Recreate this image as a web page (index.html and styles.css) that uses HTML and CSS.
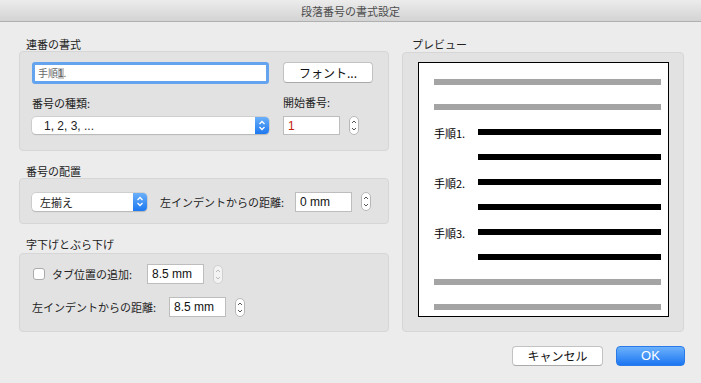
FILE: index.html
```html
<!DOCTYPE html>
<html lang="ja">
<head>
    <meta charset="UTF-8">
    <title>段落番号の書式設定</title>
    <link rel="stylesheet" href="styles.css">
</head>
<body>
    <div class="titlebar">段落番号の書式設定</div>

    <div class="main">
        <div class="left">
            <div class="group-title">連番の書式</div>
            <div class="box box-format">
                <div class="col col-wide">
                    <div class="field focus"><span class="field-text">手順<span class="sel">1</span>.</span></div>
                    <div class="label">番号の種類:</div>
                    <div class="popup popup-wide"><span class="popup-text">1, 2, 3, ...</span><span class="cap"><svg width="8" height="11" viewBox="0 0 8 11"><path d="M1.5 4 L4 1.5 L6.5 4 M1.5 7 L4 9.5 L6.5 7" fill="none" stroke="#fff" stroke-width="1.3"/></svg></span></div>
                </div>
                <div class="col">
                    <div class="button font-btn">フォント...</div>
                    <div class="label">開始番号:</div>
                    <div class="row">
                        <div class="input input-start"><span class="red">1</span></div>
                        <div class="stepper"><svg width="8" height="15" viewBox="0 0 8 15"><path d="M2 5 L4 3 L6 5 M2 10 L4 12 L6 10" fill="none" stroke="#555" stroke-width="1"/></svg></div>
                    </div>
                </div>
            </div>

            <div class="group-title gap">番号の配置</div>
            <div class="box box-align">
                <div class="popup popup-small"><span class="popup-text">左揃え</span><span class="cap"><svg width="8" height="11" viewBox="0 0 8 11"><path d="M1.5 4 L4 1.5 L6.5 4 M1.5 7 L4 9.5 L6.5 7" fill="none" stroke="#fff" stroke-width="1.3"/></svg></span></div>
                <div class="label inline dist">左インデントからの距離:</div>
                <div class="input input-mm">0 mm</div>
                <div class="stepper"><svg width="8" height="15" viewBox="0 0 8 15"><path d="M2 5 L4 3 L6 5 M2 10 L4 12 L6 10" fill="none" stroke="#555" stroke-width="1"/></svg></div>
            </div>

            <div class="group-title gap gap-last">字下げとぶら下げ</div>
            <div class="box box-indent">
                <div class="row">
                    <div class="checkbox"></div>
                    <div class="label inline tab">タブ位置の追加:</div>
                    <div class="input input-mm">8.5 mm</div>
                    <div class="stepper off"><svg width="8" height="15" viewBox="0 0 8 15"><path d="M2 5 L4 3 L6 5 M2 10 L4 12 L6 10" fill="none" stroke="#bbb" stroke-width="1"/></svg></div>
                </div>
                <div class="row row-second">
                    <div class="label inline">左インデントからの距離:</div>
                    <div class="input input-mm">8.5 mm</div>
                    <div class="stepper"><svg width="8" height="15" viewBox="0 0 8 15"><path d="M2 5 L4 3 L6 5 M2 10 L4 12 L6 10" fill="none" stroke="#555" stroke-width="1"/></svg></div>
                </div>
            </div>
        </div>

        <div class="right">
            <div class="group-title preview-title">プレビュー</div>
            <div class="box box-preview">
                <div class="page">
                    <div class="pline"><span class="bar gray"></span></div>
                    <div class="pline"><span class="bar gray"></span></div>
                    <div class="pline"><span class="step">手順1.</span><span class="bar"></span></div>
                    <div class="pline"><span class="step"></span><span class="bar"></span></div>
                    <div class="pline"><span class="step">手順2.</span><span class="bar"></span></div>
                    <div class="pline"><span class="step"></span><span class="bar"></span></div>
                    <div class="pline"><span class="step">手順3.</span><span class="bar"></span></div>
                    <div class="pline"><span class="step"></span><span class="bar"></span></div>
                    <div class="pline"><span class="bar gray"></span></div>
                    <div class="pline"><span class="bar gray"></span></div>
                </div>
            </div>
        </div>
    </div>

    <div class="actions">
        <div class="button cancel">キャンセル</div>
        <div class="button ok">OK</div>
    </div>
</body>
</html>
```

FILE: styles.css
```css
body {
    margin: 0;
    width: 701px;
    height: 383px;
    overflow: hidden;
    background: #ececec;
    font-family: "Noto Sans CJK JP", "Liberation Sans", sans-serif;
    font-size: 11px;
    color: #222;
}
.titlebar {
    height: 21px;
    line-height: 22px;
    text-align: center;
    font-size: 11px;
    color: #4d4d4d;
    background: linear-gradient(#ececec, #d3d3d3);
    border-bottom: 1px solid #b0b0b0;
}
.main {
    display: flex;
    padding: 16px 0 0 19px;
}
.left {
    width: 370px;
}
.right {
    width: 282px;
    margin-left: 13px;
}
.group-title {
    height: 13px;
    line-height: 13px;
    padding-left: 7px;
    color: #222;
}
.group-title.gap {
    margin-top: 14px;
}
.group-title.gap-last {
    height: 15px;
}
.preview-title {
    padding-left: 10px;
    height: 14px;
}
.box {
    background: #e2e2e2;
    border: 1px solid #d6d6d6;
    border-radius: 4px;
    box-sizing: border-box;
}
.box-format {
    height: 100px;
    display: flex;
    padding: 10px 0 0 12px;
}
.col {
    display: flex;
    flex-direction: column;
}
.col-wide {
    width: 237px;
    margin-right: 14px;
}
.label {
    height: 14px;
    line-height: 14px;
    margin: 12px 0 7px;
    white-space: nowrap;
}
.label.inline {
    margin: 0;
}
.row {
    display: flex;
    align-items: center;
}
.field {
    height: 22px;
    box-sizing: border-box;
    background: #fff;
    border-radius: 3px;
}
.field.focus {
    border: 3px solid #64a3ee;
    padding-left: 3px;
    line-height: 16px;
    color: #666;
    font-size: 10px;
}
.sel {
    background: #c8c8c8;
    color: #555;
    font-family: "Liberation Sans", sans-serif;
}
.field-text {
    font-family: "Noto Sans CJK JP", sans-serif;
}
.button {
    box-sizing: border-box;
    background: #fff;
    border: 1px solid #c2c2c2;
    border-bottom-color: #aaa;
    border-radius: 4px;
    text-align: center;
    color: #111;
}
.font-btn {
    width: 90px;
    height: 21px;
    line-height: 19px;
    font-size: 12px;
}
.popup {
    position: relative;
    height: 17px;
    box-sizing: border-box;
    background: #fff;
    border-radius: 4px;
    box-shadow: 0 0 0 0.5px #bbb, 0 1px 1px rgba(0, 0, 0, 0.2);
    line-height: 17px;
}
.popup-wide {
    width: 237px;
}
.popup-small {
    width: 115px;
    height: 18px;
    line-height: 18px;
    flex: none;
}
.popup-text {
    padding-left: 12px;
    font-size: 12px;
    font-family: "Liberation Sans", "Noto Sans CJK JP", sans-serif;
}
.popup-small .popup-text {
    padding-left: 8px;
    font-family: "Noto Sans CJK JP", sans-serif;
    font-size: 11px;
}
.cap {
    position: absolute;
    top: 0;
    right: 0;
    width: 14px;
    height: 100%;
    border-radius: 0 4px 4px 0;
    background: linear-gradient(#6ab0fa, #1e78f0);
    display: flex;
    align-items: center;
    justify-content: center;
}
.input {
    box-sizing: border-box;
    height: 20px;
    background: #fff;
    border: 1px solid #bdbdbd;
    padding-left: 4px;
    line-height: 18px;
    font-family: "Liberation Sans", sans-serif;
    font-size: 12px;
    color: #111;
    flex: none;
}
.input-start {
    width: 57px;
    height: 19px;
}
.red {
    color: #c0210c;
}
.input-mm {
    width: 57px;
}
.stepper {
    box-sizing: border-box;
    width: 10px;
    height: 19px;
    margin-left: 9px;
    background: #fff;
    border: 1px solid #b8b8b8;
    border-radius: 5px;
    display: flex;
    align-items: center;
    justify-content: center;
    flex: none;
}
.stepper svg {
    flex: none;
}
.stepper.off {
    border-color: #d0d0d0;
    background: #f3f3f3;
}
.box-align {
    height: 46px;
    display: flex;
    align-items: center;
    padding: 1px 0 0 12px;
}
.label.dist {
    margin: 0 11px 0 13px;
    flex: none;
}
.box-indent {
    height: 79px;
    padding: 10px 0 0 12px;
}
.checkbox {
    box-sizing: border-box;
    width: 12px;
    height: 12px;
    margin-left: 1px;
    background: #fff;
    border: 1px solid #aaa;
    border-radius: 3px;
}
.label.tab {
    margin-left: 7px;
    width: 95px;
}
.row-second .label {
    width: 137px;
}
.row-second {
    margin-top: 13px;
}
.box-preview {
    height: 280px;
    padding-top: 9px;
}
.page {
    box-sizing: border-box;
    width: 251px;
    height: 255px;
    margin-left: 15px;
    background: #fff;
    border: 1px solid #000;
    padding: 16px 7px 0 15px;
    display: flex;
    flex-direction: column;
    gap: 19px;
}
.pline {
    height: 6px;
    display: flex;
    align-items: center;
}
.bar {
    flex: 1;
    height: 6px;
    background: #000;
}
.bar.gray {
    background: #a4a4a4;
}
.step {
    width: 44px;
    flex: none;
    font-size: 11px;
    color: #000;
    white-space: nowrap;
    line-height: 12px;
    padding-top: 2px;
}
.actions {
    display: flex;
    justify-content: flex-end;
    gap: 13px;
    padding: 14px 16px 0 0;
}
.cancel {
    width: 91px;
    height: 20px;
    line-height: 18px;
    font-size: 12px;
}
.ok {
    width: 69px;
    height: 20px;
    line-height: 18px;
    font-size: 13px;
    color: #fff;
    border: 1px solid #2a7ae8;
    background: linear-gradient(#6cb1fb, #1c76f2);
    font-family: "Liberation Sans", sans-serif;
}
```
